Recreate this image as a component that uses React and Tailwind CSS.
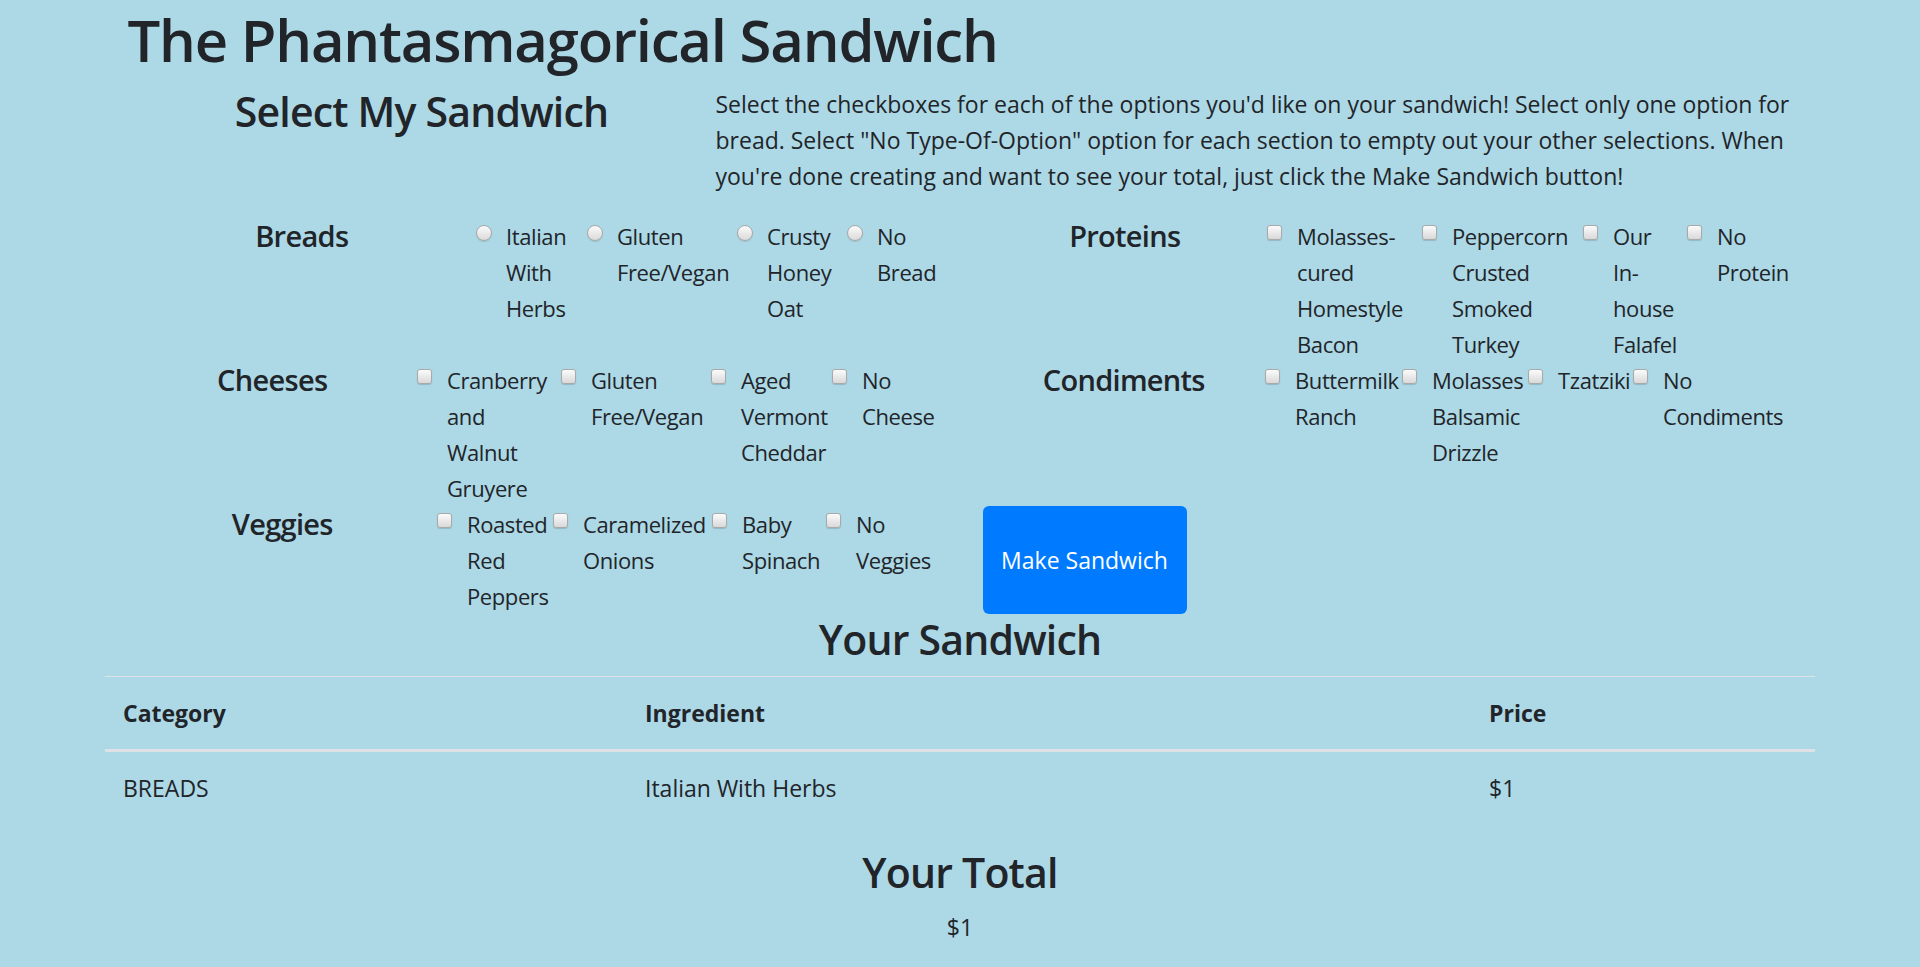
import React from "react";

const FONT = { fontFamily: '"Open Sans", "Noto Sans", sans-serif' };

const leftSections = [
  {
    label: "Breads",
    lw: "w-[348.5px]",
    radio: true,
    items: [
      ["Italian With Herbs", "w-[111px]"],
      ["Gluten Free/Vegan", "w-[150px]"],
      ["Crusty Honey Oat", "w-[110px]"],
      ["No Bread", "w-[90.5px]"],
    ],
  },
  {
    label: "Cheeses",
    lw: "w-[289.5px]",
    items: [
      ["Cranberry and Walnut Gruyere", "w-[144px]"],
      ["Gluten Free/Vegan", "w-[150px]"],
      ["Aged Vermont Cheddar", "w-[121px]"],
      ["No Cheese", "w-[105.5px]"],
    ],
  },
  {
    label: "Veggies",
    lw: "w-[309.5px]",
    items: [
      ["Roasted Red Peppers", "w-[116px]"],
      ["Caramelized Onions", "w-[159px]"],
      ["Baby Spinach", "w-[114px]"],
      ["No Veggies", "w-[111.5px]"],
    ],
  },
];

const rightSections = [
  {
    label: "Proteins",
    lw: "w-[284.5px]",
    items: [
      ["Molasses-cured Homestyle Bacon", "w-[155px]"],
      ["Peppercorn Crusted Smoked Turkey", "w-[161px]"],
      ["Our In-house Falafel", "w-[104px]"],
      ["No Protein", "w-[105.5px]"],
    ],
  },
  {
    label: "Condiments",
    lw: "w-[282.5px]",
    items: [
      ["Buttermilk Ranch", "w-[137px]"],
      ["Molasses Balsamic Drizzle", "w-[126px]"],
      ["Tzatziki", "w-[105px]"],
      ["No Condiments", "w-[159.5px]"],
    ],
  },
];

function Box({ radio }) {
  return radio ? (
    <span className="absolute left-0 top-[7px] h-4 w-4 rounded-full border border-[#a9a9a9] bg-linear-to-b from-[#fbfbfb] to-[#dadada] shadow-[0_1px_1px_rgba(0,0,0,0.12)]" />
  ) : (
    <span className="absolute left-0 top-[7px] h-[15px] w-[15px] rounded-[3px] border border-[#a9a9a9] bg-linear-to-b from-[#fbfbfb] to-[#d9d9d9] shadow-[0_1px_1px_rgba(0,0,0,0.15)]" />
  );
}

function Section({ s }) {
  return (
    <div className="flex">
      <div className={`${s.lw} shrink-0 text-center text-[29px] leading-[36px] font-semibold tracking-[-0.7px]`}>
        {s.label}
      </div>
      {s.items.map(([text, w]) => (
        <label key={text} className={`${w} relative shrink-0 pl-[30px]`}>
          <Box radio={s.radio} />
          <span className="block w-min text-[22px] tracking-[-0.4px]">{text}</span>
        </label>
      ))}
    </div>
  );
}

export default function App() {
  return (
    <div className="min-h-screen bg-[#add8e6] text-[23px] leading-[36px] text-[#212529]" style={FONT}>
      <div className="mx-auto w-[1710px] px-[22.5px]">
        <h1 className="pt-[4px] text-[58px] leading-[72px] font-semibold tracking-[-1.2px]">
          The Phantasmagorical Sandwich
        </h1>
        <div className="mt-[10px] flex">
          <div className="w-[588px] shrink-0 text-center">
            <h3 className="text-[41px] leading-[50px] font-semibold tracking-[-0.8px]">Select My Sandwich</h3>
          </div>
          <p className="flex-1 whitespace-nowrap">
            Select the checkboxes for each of the options you'd like on your sandwich! Select only one option for
            <br />
            bread. Select "No Type-Of-Option" option for each section to empty out your other selections. When
            <br />
            you're done creating and want to see your total, just click the Make Sandwich button!
          </p>
        </div>
        <div className="mt-[24px] grid grid-cols-2 gap-x-[45px]">
          <Section s={leftSections[0]} />
          <Section s={rightSections[0]} />
          <Section s={leftSections[1]} />
          <Section s={rightSections[1]} />
          <Section s={leftSections[2]} />
          <button className="w-[204px] justify-self-start rounded-[6px] bg-[#007bff] text-[23px] text-white">
            Make Sandwich
          </button>
        </div>
        <h3 className="text-center text-[41px] leading-[50px] font-semibold tracking-[-0.8px]">Your Sandwich</h3>
        <table className="-mx-[22.5px] mt-[12px] w-[1710px] table-fixed border-collapse">
          <thead>
            <tr>
              <th className="w-[522px] border-t border-b-[3px] border-[#dee2e6] p-[18px] text-left font-bold">Category</th>
              <th className="w-[844px] border-t border-b-[3px] border-[#dee2e6] p-[18px] text-left font-bold">Ingredient</th>
              <th className="w-[344px] border-t border-b-[3px] border-[#dee2e6] p-[18px] text-left font-bold">Price</th>
            </tr>
          </thead>
          <tbody>
            <tr>
              <td className="p-[18px]">BREADS</td>
              <td className="p-[18px]">Italian With Herbs</td>
              <td className="p-[18px]">$1</td>
            </tr>
          </tbody>
        </table>
        <h3 className="mt-[23px] text-center text-[41px] leading-[50px] font-semibold tracking-[-0.8px]">
          Your Total
        </h3>
        <p className="mt-[12px] text-center">$1</p>
      </div>
    </div>
  );
}
